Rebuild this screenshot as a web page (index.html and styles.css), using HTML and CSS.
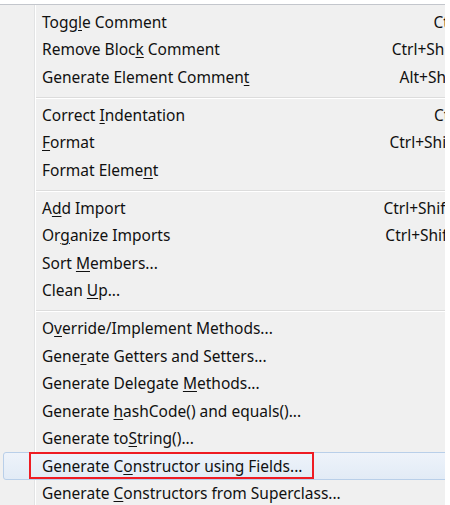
FILE: index.html
```html
<!DOCTYPE html>
<html>
<head>
<meta charset="utf-8">
<link rel="stylesheet" href="styles.css">
</head>
<body>
<div class="menu">
  <div class="group">
    <div class="item"><span class="label">Togg<u>l</u>e Comment</span><span class="key">Ctrl+/</span></div>
    <div class="item"><span class="label">Remove Bloc<u>k</u> Comment</span><span class="key">Ctrl+Shift+\</span></div>
    <div class="item"><span class="label">Generate Element Commen<u>t</u></span><span class="key">Alt+Shift+J</span></div>
  </div>
  <div class="sep"></div>
  <div class="group">
    <div class="item"><span class="label">Correct <u>I</u>ndentation</span><span class="key">Ctrl+I</span></div>
    <div class="item"><span class="label"><u>F</u>ormat</span><span class="key">Ctrl+Shift+F</span></div>
    <div class="item"><span class="label">Format Eleme<u>n</u>t</span></div>
  </div>
  <div class="sep"></div>
  <div class="group">
    <div class="item"><span class="label">A<u>d</u>d Import</span><span class="key">Ctrl+Shift+M</span></div>
    <div class="item"><span class="label">Or<u>g</u>anize Imports</span><span class="key">Ctrl+Shift+O</span></div>
    <div class="item"><span class="label">Sort <u>M</u>embers...</span></div>
    <div class="item"><span class="label">Clean <u>U</u>p...</span></div>
  </div>
  <div class="sep"></div>
  <div class="group">
    <div class="item"><span class="label">O<u>v</u>erride/Implement Methods...</span></div>
    <div class="item"><span class="label">Gene<u>r</u>ate Getters and Setters...</span></div>
    <div class="item"><span class="label">Generate Delegate <u>M</u>ethods...</span></div>
    <div class="item"><span class="label">Generate <u>h</u>ashCode() and equals()...</span></div>
    <div class="item"><span class="label">Generate to<u>S</u>tring()...</span></div>
    <div class="item item-hover"><span class="label">Generate C<u>o</u>nstructor using Fields...</span><span class="mark"></span></div>
    <div class="item"><span class="label">Generate <u>C</u>onstructors from Superclass...</span></div>
  </div>
</div>
</body>
</html>
```

FILE: styles.css
```css
html, body {
  margin: 0;
  padding: 0;
  background: #ffffff;
}
body {
  padding-top: 4px;
  font-family: "Noto Sans", "Open Sans", sans-serif;
  font-size: 15.5px;
  color: #111111;
}
.menu {
  width: 445px;
  height: 501px;
  overflow: hidden;
  border-top: 1px solid #c3c6cc;
  box-sizing: border-box;
  padding-top: 3px;
  background:
    linear-gradient(to right, transparent 34px, #e2e3e4 34px, #e2e3e4 35px, #ffffff 35px, #ffffff 36px, transparent 36px),
    #f0f0f0;
}
.group {
  display: flex;
  flex-direction: column;
  width: 500px;
}
.item {
  position: relative;
  display: flex;
  align-items: center;
  height: 27.5px;
  box-sizing: border-box;
  padding-left: 42px;
  padding-right: 26px;
  white-space: nowrap;
}
.item u {
  text-decoration-thickness: 1px;
  text-underline-offset: 2px;
}
.key {
  margin-left: auto;
}
.sep {
  width: 500px;
  height: 10.5px;
  box-sizing: border-box;
  margin-left: 36px;
  padding-top: 6px;
}
.sep::before {
  content: "";
  display: block;
  height: 1px;
  background: #dcdcdc;
  border-bottom: 1px solid #ffffff;
}
.item-hover {
  margin-left: 3px;
  width: 497px;
  padding-left: 38px;
  border: 1px solid #b9cfe9;
  border-radius: 3px;
  background: linear-gradient(to bottom, #eef3fa, #e2ebf6);
}
.mark {
  position: absolute;
  left: 25px;
  top: -1px;
  width: 285px;
  height: 27px;
  box-sizing: border-box;
  border: 2px solid #ee1c24;
}
```
